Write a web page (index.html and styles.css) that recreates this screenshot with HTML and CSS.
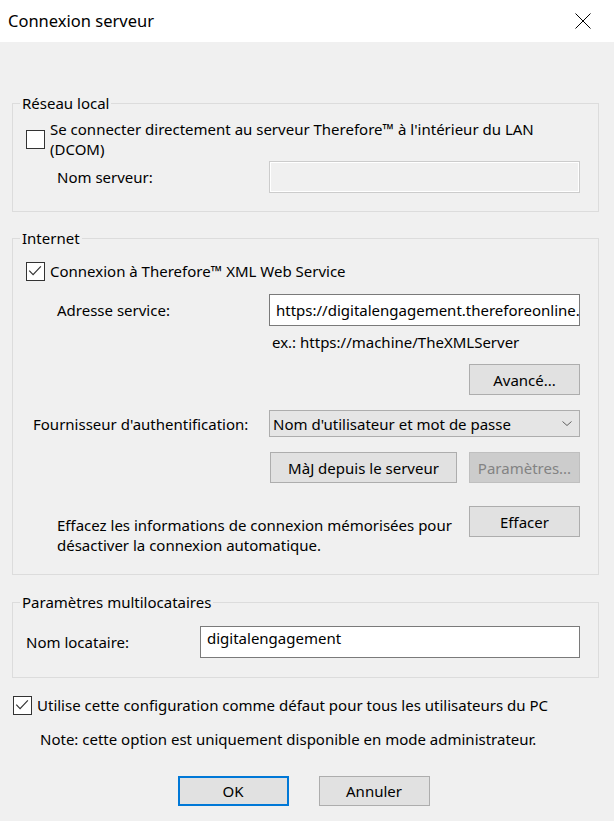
FILE: index.html
```html
<!DOCTYPE html>
<html lang="fr">
<head>
    <meta charset="UTF-8">
    <meta name="viewport" content="width=device-width, initial-scale=1.0">
    <title>Connexion serveur</title>
    <link rel="stylesheet" href="styles.css">
</head>
<body>
    <div class="titlebar">
        <span class="title">Connexion serveur</span>
        <svg class="close" viewBox="0 0 16 16" width="16" height="16">
            <path d="M0.5 0.5 L15.5 15.5 M15.5 0.5 L0.5 15.5" stroke="#000" stroke-width="1" fill="none"/>
        </svg>
    </div>

    <div class="content">
        <fieldset class="group group-local">
            <legend>Réseau local</legend>
            <div class="group-body">
                <div class="check-row">
                    <span class="box"></span>
                    <span class="check-text">Se connecter directement au serveur Therefore™ à l'intérieur du LAN<br>(DCOM)</span>
                </div>
                <div class="field-row row-server">
                    <span class="field-label">Nom serveur:</span>
                    <div class="edit disabled"></div>
                </div>
            </div>
        </fieldset>

        <fieldset class="group group-internet">
            <legend>Internet</legend>
            <div class="group-body">
                <div class="check-row">
                    <span class="box">
                        <svg viewBox="0 0 19 19" width="17" height="17"><polyline points="2.5,8.5 6.8,13 15.5,3.8" fill="none" stroke="#333" stroke-width="1.3"/></svg>
                    </span>
                    <span class="check-text">Connexion à Therefore™ XML Web Service</span>
                </div>
                <div class="field-row row-address">
                    <span class="field-label">Adresse service:</span>
                    <div class="edit"><span class="edit-text">https://digitalengagement.thereforeonline.</span></div>
                </div>
                <div class="hint">ex.: https://machine/TheXMLServer</div>
                <div class="button-row row-advanced">
                    <button class="btn">Avancé...</button>
                </div>
                <div class="field-row row-auth">
                    <span class="field-label">Fournisseur d'authentification:</span>
                    <div class="combo">
                        <span>Nom d'utilisateur et mot de passe</span>
                        <svg viewBox="0 0 10 5" width="10" height="5"><polyline points="0.5,0.5 5,4.5 9.5,0.5" fill="none" stroke="#606060" stroke-width="1"/></svg>
                    </div>
                </div>
                <div class="button-row row-server-buttons">
                    <button class="btn btn-wide">MàJ depuis le serveur</button>
                    <button class="btn" disabled>Paramètres...</button>
                </div>
                <div class="clear-row">
                    <p class="clear-text">Effacez les informations de connexion mémorisées pour<br>désactiver la connexion automatique.</p>
                    <button class="btn">Effacer</button>
                </div>
            </div>
        </fieldset>

        <fieldset class="group group-tenant">
            <legend>Paramètres multilocataires</legend>
            <div class="group-body">
                <div class="field-row row-tenant">
                    <span class="field-label">Nom locataire:</span>
                    <div class="edit edit-multi"><span class="edit-text">digitalengagement</span></div>
                </div>
            </div>
        </fieldset>

        <div class="check-row row-default">
            <span class="box">
                <svg viewBox="0 0 19 19" width="17" height="17"><polyline points="2.5,8.5 6.8,13 15.5,3.8" fill="none" stroke="#333" stroke-width="1.3"/></svg>
            </span>
            <span class="check-text">Utilise cette configuration comme défaut pour tous les utilisateurs du PC</span>
        </div>
        <p class="note">Note: cette option est uniquement disponible en mode administrateur.</p>

        <div class="dialog-buttons">
            <button class="btn btn-default">OK</button>
            <button class="btn">Annuler</button>
        </div>
    </div>
</body>
</html>
```

FILE: styles.css
```css
* {
    margin: 0;
    padding: 0;
    box-sizing: border-box;
}
html, body {
    height: 100%;
    background-color: #f0f0f0;
}
body {
    font-family: "Noto Sans", "Open Sans", sans-serif;
    font-size: 15px;
    line-height: 20px;
    color: #000;
}

/* title bar */
.titlebar {
    height: 42px;
    background-color: #fff;
    display: flex;
    align-items: center;
    justify-content: space-between;
    padding: 0 23px 0 8px;
}
.title {
    font-size: 16.5px;
}
.close {
    display: block;
}

.content {
    padding: 0 15px 0 12px;
}

/* group boxes */
.group {
    border: 1px solid #dcdcdc;
    min-width: 0;
}
.group legend {
    margin-left: 7px;
    padding: 0 2px;
    line-height: 18px;
}
.group-body {
    padding: 7px 18px 18px 13px;
}
.group-local {
    margin-top: 52px;
}
.group-internet {
    margin-top: 17px;
}
.group-internet .group-body {
    padding-top: 14px;
    padding-bottom: 19px;
}
.group-tenant {
    margin-top: 18px;
}
.group-tenant .group-body {
    padding-top: 15px;
    padding-bottom: 19px;
}

/* checkboxes */
.check-row {
    display: flex;
    align-items: center;
    gap: 5px;
}
.box {
    width: 19px;
    height: 19px;
    flex: none;
    border: 1px solid #333;
    background-color: #fff;
}
.box svg {
    display: block;
}

/* label + control rows */
.field-row {
    display: flex;
    align-items: center;
}
.field-label {
    flex: none;
    width: 243px;
    padding-left: 31px;
}
.row-server {
    margin-top: 2px;
}
.row-address {
    margin-top: 13px;
}
.row-auth {
    margin-top: 15px;
}
.row-auth .field-label {
    padding-left: 7px;
}
.row-tenant .field-label {
    width: 174px;
    padding-left: 0;
}

.edit {
    flex: 1;
    height: 32px;
    border: 1px solid #7a7a7a;
    background-color: #fff;
    padding: 0 0 0 6px;
    display: flex;
    align-items: center;
    overflow: hidden;
    white-space: nowrap;
}
.edit.disabled {
    background-color: #f0f0f0;
    border-color: #ccc;
    box-shadow: inset 0 0 0 1px #fff;
}
.edit-multi {
    align-items: flex-start;
    padding-top: 1px;
}

.combo {
    flex: 1;
    height: 27px;
    border: 1px solid #adadad;
    background-color: #e5e5e5;
    display: flex;
    align-items: center;
    justify-content: space-between;
    padding: 0 7px 0 3px;
}
.combo svg {
    display: block;
}

.hint {
    margin-top: 6px;
    padding-left: 246px;
}

/* buttons */
.btn {
    font: inherit;
    color: #000;
    height: 31px;
    width: 111px;
    border: 1px solid #adadad;
    background-color: #e1e1e1;
}
.btn:disabled {
    background-color: #ccc;
    border-color: #bfbfbf;
    color: #838383;
}
.btn-wide {
    width: 187px;
}
.button-row {
    display: flex;
    justify-content: flex-end;
    gap: 12px;
}
.row-advanced {
    margin-top: 12px;
}
.row-server-buttons {
    margin-top: 15px;
}

.clear-row {
    display: flex;
    justify-content: space-between;
    align-items: flex-start;
    margin-top: 23px;
}
.clear-text {
    margin-top: 9px;
    padding-left: 31px;
}

/* bottom of dialog */
.row-default {
    margin-top: 17px;
    padding-left: 1px;
}
.note {
    margin-top: 14px;
    padding-left: 28px;
}
.dialog-buttons {
    display: flex;
    justify-content: center;
    gap: 30px;
    margin-top: 27px;
    padding-right: 4px;
}
.dialog-buttons .btn {
    height: 30px;
}
.btn-default {
    border: 2px solid #0078d7;
}
```
